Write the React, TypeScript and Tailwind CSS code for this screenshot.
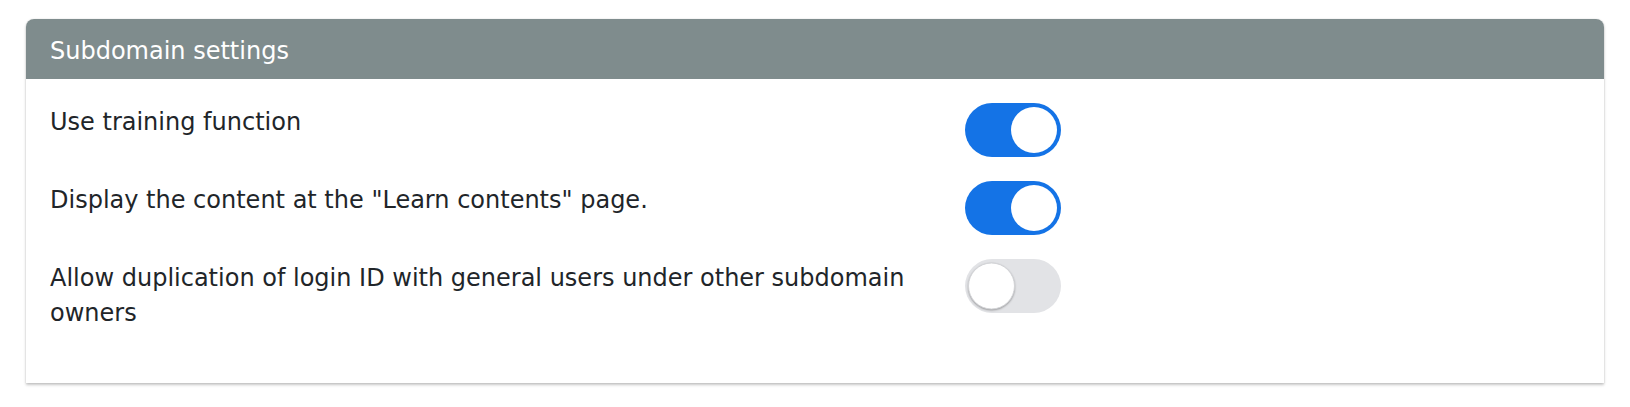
import React, { useState } from 'react';

const Toggle = ({ on, onChange }: { on: boolean; onChange: () => void }) => (
  <button
    type="button"
    onClick={onChange}
    className={`relative h-[54px] w-[96px] shrink-0 rounded-full transition-colors ${
      on ? 'bg-[#1473e6]' : 'bg-[#e2e3e6]'
    }`}
  >
    <span
      className={`absolute top-1/2 -translate-y-1/2 rounded-full bg-white transition-all ${
        on
          ? 'left-[46px] h-[46px] w-[46px]'
          : 'left-[3px] h-[47px] w-[47px] shadow-[0_1px_2px_rgba(0,0,0,0.3)] border border-[#d3d4d7]'
      }`}
    />
  </button>
);

export default function App() {
  const [settings, setSettings] = useState([
    { label: 'Use training function', on: true },
    { label: 'Display the content at the "Learn contents" page.', on: true },
    { label: 'Allow duplication of login ID with general users under other subdomain owners', on: false },
  ]);

  const flip = (i: number) =>
    setSettings(prev => prev.map((s, j) => (j === i ? { ...s, on: !s.on } : s)));

  return (
    <div className="min-h-screen bg-white px-[26px] pt-[19px] font-['DejaVu_Sans',Verdana,sans-serif] text-[24px] leading-[35px]">
      <div className="rounded-t-[8px] bg-white shadow-[0_2px_3px_rgba(0,0,0,0.22),0_0_2px_rgba(0,0,0,0.12)]">
        {/* header */}
        <div className="flex h-[60px] items-center rounded-t-[8px] bg-[#7f8c8d] px-6 pt-[4px] text-white">
          Subdomain settings
        </div>

        {/* body */}
        <div className="px-6 pb-[28px] pt-6 text-[#212529]">
          {settings.map((s, i) => (
            <div key={i} className="mb-6 grid grid-cols-[915px_auto] items-start">
              <div className="pr-8 pt-[2px]">{s.label}</div>
              <Toggle on={s.on} onChange={() => flip(i)} />
            </div>
          ))}
        </div>
      </div>
    </div>
  );
}
